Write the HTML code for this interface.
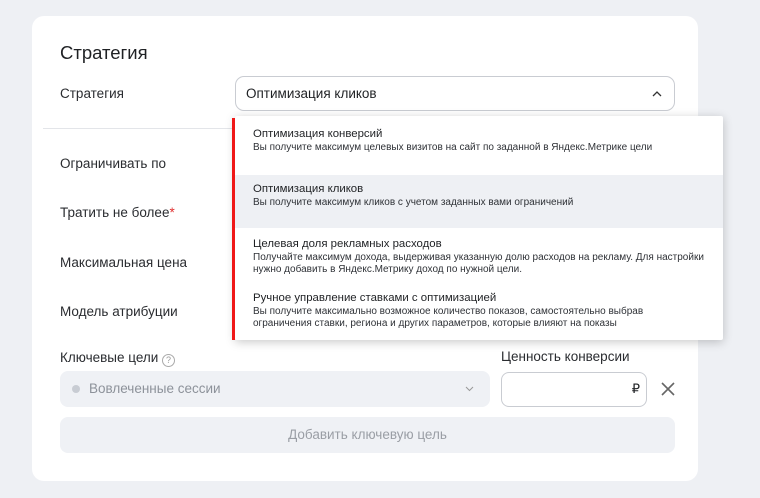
<!DOCTYPE html>
<html><head><meta charset="utf-8"><style>
*{box-sizing:border-box;margin:0;padding:0}
body{width:760px;height:498px;background:#eef0f4;font-family:"Liberation Sans",sans-serif;color:#1f2124;position:relative;overflow:hidden}
.card{position:absolute;left:32px;top:16px;width:666px;height:465px;background:#fff;border-radius:12px}
.a{position:absolute}
.lbl{font-size:13.5px;color:#2a2c30}
.sel{left:235px;top:76px;width:440px;height:35px;border:1px solid #c9ccd2;border-radius:9px;font-size:13.5px;padding:9px 10px}
.dd{left:235px;top:116px;width:488px;height:224px;background:#fff;box-shadow:0 2px 10px rgba(0,0,0,.22);border-radius:2px}
.it{position:absolute;left:0;width:488px;padding-left:18px;padding-right:8px}
.it b{display:block;font-weight:normal;font-size:11.4px;color:#1f2124}
.it span{display:block;font-size:10px;color:#2f3237;line-height:12px;margin-top:2px}
</style></head><body>
<div class="card"></div>
<div class="a" style="left:60px;top:42px;font-size:18.5px;color:#1f2124">Стратегия</div>
<div class="a lbl" style="left:60px;top:86px">Стратегия</div>
<div class="a sel">Оптимизация кликов
<svg style="position:absolute;right:12px;top:13px" width="10" height="7" viewBox="0 0 10 7"><path d="M1 6L5 2L9 6" stroke="#333" stroke-width="1.3" fill="none"/></svg></div>
<div class="a" style="left:43px;top:128px;width:200px;height:1px;background:#e3e5e9"></div>
<div class="a lbl" style="left:60px;top:156px">Ограничивать по</div>
<div class="a lbl" style="left:60px;top:205px">Тратить не более<span style="color:#e03030">*</span></div>
<div class="a lbl" style="left:60px;top:255px">Максимальная цена</div>
<div class="a lbl" style="left:60px;top:304px">Модель атрибуции</div>
<div class="a lbl" style="left:60px;top:350px">Ключевые цели <span style="display:inline-block;width:13px;height:13px;border:1px solid #aaa;border-radius:50%;font-size:9px;color:#999;text-align:center;line-height:11px;vertical-align:-1px">?</span></div>
<div class="a lbl" style="left:501px;top:349px">Ценность конверсии</div>
<div class="a" style="left:60px;top:371px;width:430px;height:36px;background:#eff1f5;border-radius:8px;font-size:13.5px;color:#8d929a;padding:10px 0 0 29px">Вовлеченные сессии
<span style="position:absolute;left:12px;top:14px;width:8px;height:8px;border-radius:50%;background:#c8ccd3"></span>
<svg style="position:absolute;right:16px;top:15px" width="9" height="6" viewBox="0 0 9 6"><path d="M1 1L4.5 4.5L8 1" stroke="#999" fill="none"/></svg></div>
<div class="a" style="left:501px;top:372px;width:146px;height:35px;border:1px solid #c9ccd2;border-radius:8px;font-size:13px;text-align:right;padding:8px 6px">₽</div>
<svg class="a" style="left:661px;top:382px" width="14" height="14" viewBox="0 0 14 14"><path d="M1 1L13 13M13 1L1 13" stroke="#666" stroke-width="1.6"/></svg>
<div class="a" style="left:60px;top:417px;width:615px;height:36px;background:#eff1f5;border-radius:8px;font-size:13.5px;color:#9a9ea5;text-align:center;padding-top:10px">Добавить ключевую цель</div>
<div class="a dd">
<div class="it" style="top:12px"><b>Оптимизация конверсий</b><span>Вы получите максимум целевых визитов на сайт по заданной в Яндекс.Метрике цели</span></div>
<div class="it" style="top:59px;height:53px;background:#eef0f4;padding-top:8px"><b>Оптимизация кликов</b><span>Вы получите максимум кликов с учетом заданных вами ограничений</span></div>
<div class="it" style="top:122px"><b>Целевая доля рекламных расходов</b><span>Получайте максимум дохода, выдерживая указанную долю расходов на рекламу. Для настройки нужно добавить в Яндекс.Метрику доход по нужной цели.</span></div>
<div class="it" style="top:176px;padding-right:40px"><b>Ручное управление ставками с оптимизацией</b><span>Вы получите максимально возможное количество показов, самостоятельно выбрав ограничения ставки, региона и других параметров, которые влияют на показы</span></div>
</div>
<div class="a" style="left:232px;top:118px;width:3px;height:222px;background:#f01818"></div>
</body></html>
